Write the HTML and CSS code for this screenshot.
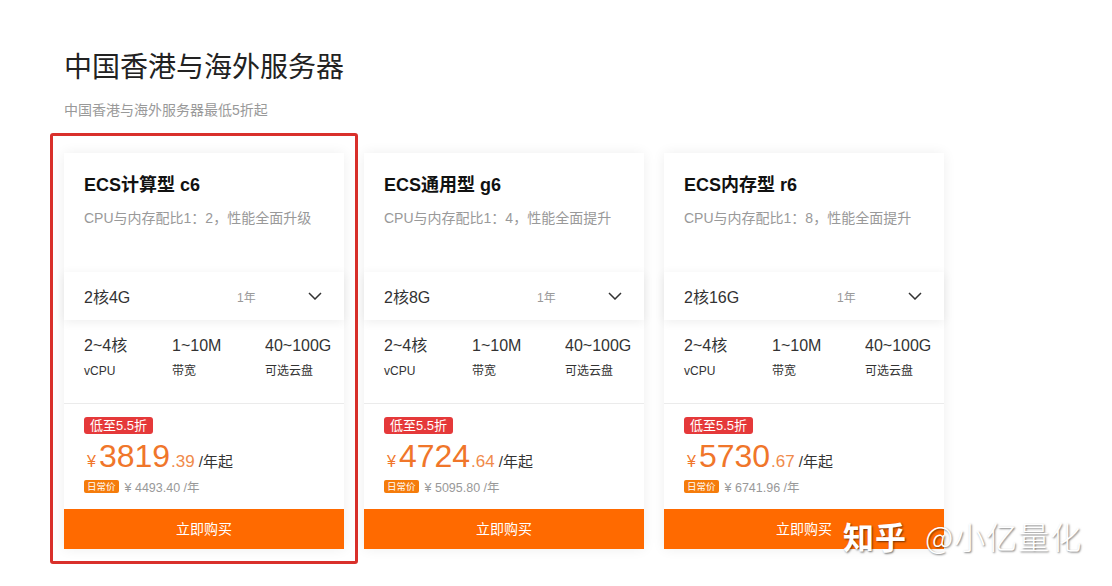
FILE: index.html
```html
<!DOCTYPE html>
<html lang="zh-CN">
<head>
<meta charset="utf-8">
<title>中国香港与海外服务器</title>
<link rel="stylesheet" href="styles.css">
</head>
<body>
<div class="page">
  <h1 class="title">中国香港与海外服务器</h1>
  <p class="subtitle">中国香港与海外服务器最低5折起</p>
  <div class="cards">
    <div class="card">
      <div class="highlight"></div>
      <div class="card-head">
        <div class="card-title">ECS计算型 c6</div>
        <div class="card-desc">CPU与内存配比1：2，性能全面升级</div>
      </div>
      <div class="select">
        <span class="sel-spec">2核4G</span>
        <span class="sel-term">1年</span>
        <svg class="chev" width="14" height="8" viewBox="0 0 14 8"><polyline points="1,1 7,7 13,1" fill="none" stroke="#333" stroke-width="1.5"/></svg>
      </div>
      <div class="specs">
        <div class="spec s1"><div class="val">2~4核</div><div class="lbl">vCPU</div></div>
        <div class="spec s2"><div class="val">1~10M</div><div class="lbl">带宽</div></div>
        <div class="spec s3"><div class="val">40~100G</div><div class="lbl">可选云盘</div></div>
      </div>
      <div class="price">
        <span class="tag">低至5.5折</span>
        <div class="now"><span class="yen">¥</span><span class="int">3819</span><span class="dec">.39</span><span class="unit">/年起</span></div>
        <div class="orig"><span class="otag">日常价</span><span class="oval">¥ 4493.40 /年</span></div>
      </div>
      <div class="buy">立即购买</div>
    </div>
    <div class="card">
      <div class="card-head">
        <div class="card-title">ECS通用型 g6</div>
        <div class="card-desc">CPU与内存配比1：4，性能全面提升</div>
      </div>
      <div class="select">
        <span class="sel-spec">2核8G</span>
        <span class="sel-term">1年</span>
        <svg class="chev" width="14" height="8" viewBox="0 0 14 8"><polyline points="1,1 7,7 13,1" fill="none" stroke="#333" stroke-width="1.5"/></svg>
      </div>
      <div class="specs">
        <div class="spec s1"><div class="val">2~4核</div><div class="lbl">vCPU</div></div>
        <div class="spec s2"><div class="val">1~10M</div><div class="lbl">带宽</div></div>
        <div class="spec s3"><div class="val">40~100G</div><div class="lbl">可选云盘</div></div>
      </div>
      <div class="price">
        <span class="tag">低至5.5折</span>
        <div class="now"><span class="yen">¥</span><span class="int">4724</span><span class="dec">.64</span><span class="unit">/年起</span></div>
        <div class="orig"><span class="otag">日常价</span><span class="oval">¥ 5095.80 /年</span></div>
      </div>
      <div class="buy">立即购买</div>
    </div>
    <div class="card">
      <div class="card-head">
        <div class="card-title">ECS内存型 r6</div>
        <div class="card-desc">CPU与内存配比1：8，性能全面提升</div>
      </div>
      <div class="select">
        <span class="sel-spec">2核16G</span>
        <span class="sel-term">1年</span>
        <svg class="chev" width="14" height="8" viewBox="0 0 14 8"><polyline points="1,1 7,7 13,1" fill="none" stroke="#333" stroke-width="1.5"/></svg>
      </div>
      <div class="specs">
        <div class="spec s1"><div class="val">2~4核</div><div class="lbl">vCPU</div></div>
        <div class="spec s2"><div class="val">1~10M</div><div class="lbl">带宽</div></div>
        <div class="spec s3"><div class="val">40~100G</div><div class="lbl">可选云盘</div></div>
      </div>
      <div class="price">
        <span class="tag">低至5.5折</span>
        <div class="now"><span class="yen">¥</span><span class="int">5730</span><span class="dec">.67</span><span class="unit">/年起</span></div>
        <div class="orig"><span class="otag">日常价</span><span class="oval">¥ 6741.96 /年</span></div>
      </div>
      <div class="buy">立即购买</div>
    </div>
  </div>
  <div class="watermark"><span class="wm-zh">知乎</span><span class="wm-at">@小亿量化</span></div>
</div>
</body>
</html>
```

FILE: styles.css
```css
* { box-sizing: border-box; }
html, body { margin: 0; padding: 0; background: #fff; }
body {
  font-family: "Liberation Sans", "Noto Sans CJK SC", sans-serif;
  color: #333;
  width: 1112px;
  height: 586px;
  overflow: hidden;
}
.page {
  position: relative;
  padding: 47px 0 0 64px;
  height: 586px;
}
.title {
  margin: 0;
  font-size: 28px;
  line-height: 36px;
  color: #222;
  font-family: "Noto Sans CJK SC", sans-serif;
  font-weight: 400;
}
.subtitle {
  margin: 17px 0 0;
  font-size: 14px;
  line-height: 21px;
  color: #999;
}
.cards {
  margin-top: 32px;
  display: flex;
  gap: 20px;
}
.card {
  position: relative;
  width: 280px;
  background: #fff;
  box-shadow: 0 0 12px rgba(0, 0, 0, 0.07);
  display: flex;
  flex-direction: column;
}
.highlight {
  position: absolute;
  left: -14px;
  top: -20px;
  width: 308px;
  height: 431px;
  border: 3px solid #d9302b;
  border-radius: 3px;
  pointer-events: none;
}
.card-head {
  height: 119px;
  padding: 20px 20px 0;
}
.card-title {
  font-size: 18px;
  line-height: 24px;
  font-weight: bold;
  color: #111;
}
.card-desc {
  margin-top: 10px;
  font-size: 14px;
  line-height: 22px;
  color: #999;
}
.select {
  height: 48px;
  display: flex;
  align-items: center;
  padding: 0 20px;
  background: #fff;
  box-shadow: 0 2px 10px rgba(0, 0, 0, 0.07);
  position: relative;
}
.sel-spec {
  font-size: 16px;
  color: #333;
  width: 153px;
}
.sel-term {
  font-size: 12px;
  color: #999;
  flex: 1;
}
.chev { margin-right: 2px; }
.specs {
  display: flex;
  padding: 15px 0 23px 20px;
  border-bottom: 1px solid #ebebeb;
}
.spec .val {
  font-size: 16px;
  line-height: 21px;
  color: #333;
}
.spec .lbl {
  margin-top: 6px;
  font-size: 12px;
  line-height: 18px;
  color: #333;
}
.s1 { width: 88px; }
.s2 { width: 93px; }
.price {
  height: 105px;
  padding: 12px 20px 0;
}
.tag {
  display: inline-block;
  height: 17px;
  line-height: 17px;
  padding: 0 6px;
  font-size: 13px;
  color: #fff;
  background: #e5393a;
  border-radius: 3px;
}
.now {
  margin-top: 5px;
  height: 34px;
  display: flex;
  align-items: baseline;
  color: #f0762a;
}
.yen { font-size: 16px; margin: 0 3px 0 3px; }
.int { font-size: 32px; line-height: 34px; }
.dec { font-size: 17px; margin-left: 1px; color: #f08a4a; }
.unit { font-size: 15px; color: #333; margin-left: 4px; }
.orig {
  margin-top: 5px;
  display: flex;
  align-items: center;
  height: 16px;
}
.otag {
  display: inline-block;
  height: 13px;
  line-height: 13px;
  padding: 0 3px;
  font-size: 9.5px;
  color: #fff;
  background: #f57c0b;
  border-radius: 2px;
}
.oval {
  margin-left: 6px;
  font-size: 12.5px;
  color: #999;
}
.buy {
  height: 40px;
  line-height: 40px;
  background: #ff6a00;
  color: #fff;
  text-align: center;
  font-size: 14px;
}
.watermark {
  position: absolute;
  left: 843px;
  top: 516px;
  color: #fff;
  font-size: 31px;
  line-height: 40px;
  font-family: "Noto Sans CJK SC", sans-serif;
  text-shadow: 1px 1px 2px rgba(0, 0, 0, 0.55);
  white-space: nowrap;
}
.wm-zh { font-weight: bold; letter-spacing: 1px; }
.wm-at { font-weight: 300; letter-spacing: 1px; margin-left: 18px; font-size: 31px; }
```
